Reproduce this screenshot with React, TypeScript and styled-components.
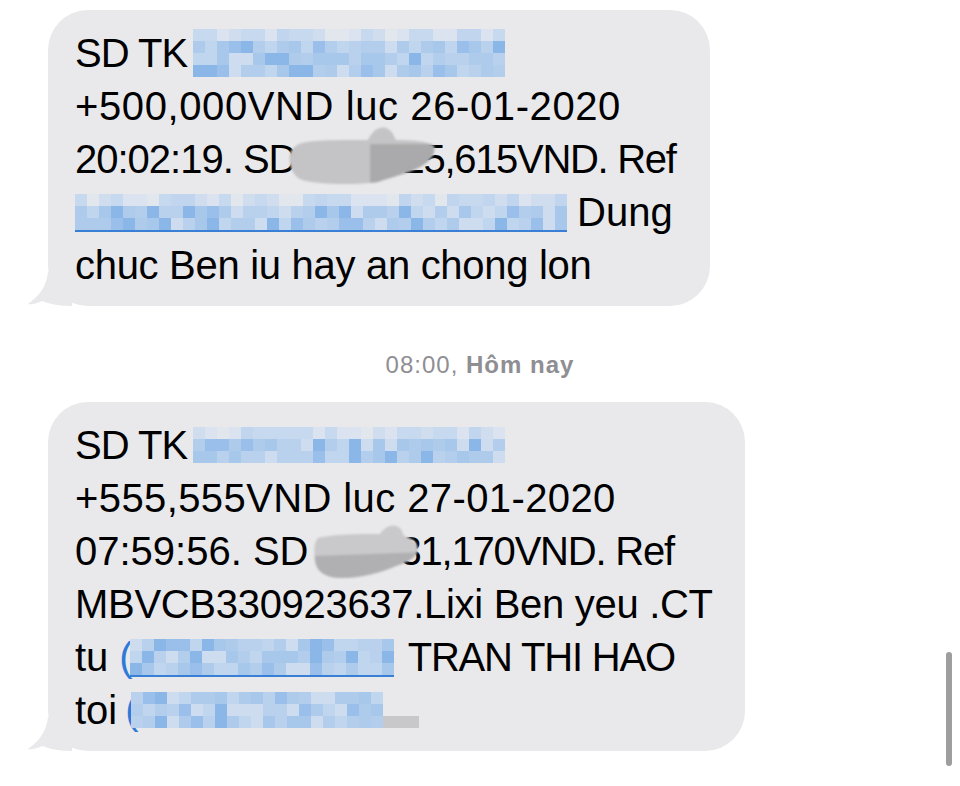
import React from 'react';
import styled, { createGlobalStyle } from 'styled-components';

const GlobalStyle = createGlobalStyle`
  html, body {
    margin: 0;
    padding: 0;
    background: #fff;
  }
  body {
    font-family: 'Liberation Sans', Arial, sans-serif;
  }
`;

const Screen = styled.div`
  width: 960px;
  height: 786px;
  position: relative;
  overflow: hidden;
  background: #fff;
  display: flex;
  flex-direction: column;
  padding: 10px 0 0 48px;
  box-sizing: border-box;
`;

const Message = styled.div`
  position: relative;
`;

const Bubble = styled.div<{ $width: number }>`
  position: relative;
  width: ${(p) => p.$width}px;
  box-sizing: border-box;
  background: #e9e9eb;
  border-radius: 40px;
  padding: 17px 20px 14px 27px;
  color: #000;
  font-size: 40px;
  line-height: 53px;
`;

const Tail = styled.svg`
  position: absolute;
  left: -20px;
  bottom: 0;
  width: 44px;
  height: 34px;
`;

const Line = styled.div<{ $track?: number }>`
  white-space: nowrap;
  display: flex;
  align-items: center;
  height: 53px;
  letter-spacing: ${(p) => p.$track ?? 0}px;
`;

const Seg = styled.span<{ $track: number }>`
  letter-spacing: ${(p) => p.$track}px;
`;

const Gap = styled.span<{ $w: number }>`
  display: inline-block;
  flex: none;
  width: ${(p) => p.$w}px;
`;

const LinkParen = styled.span`
  color: #2f7ad8;
`;

const MosaicBox = styled.span<{ $cols: number; $cell: number; $underline?: boolean; $shift?: number }>`
  display: inline-grid;
  flex: none;
  margin-left: ${(p) => p.$shift ?? 0}px;
  grid-template-columns: repeat(${(p) => p.$cols}, ${(p) => p.$cell}px);
  grid-auto-rows: ${(p) => p.$cell}px;
  border-bottom: ${(p) => (p.$underline ? '2px solid #3a7fd6' : '2px solid transparent')};
`;

const Cell = styled.span`
  display: block;
`;

const Smudge = styled.svg`
  position: absolute;
  pointer-events: none;
`;

const Stamp = styled.div`
  align-self: center;
  margin: 45px 0 0 -48px;
  height: 51px;
  font-size: 24px;
  color: #8e8e93;
  letter-spacing: 1px;
  b {
    font-weight: 700;
  }
`;

const ScrollThumb = styled.div`
  position: absolute;
  right: 8px;
  top: 652px;
  width: 6px;
  height: 114px;
  border-radius: 3px;
  background: #9e9e9e;
`;

const palette = ['#cddcee', '#c0d5ee', '#b3ceed', '#a7c7eb', '#99bfea', '#8bb7e8', '#b9d1ed', '#aecbec'];
const topPalette = ['#dae3ef', '#d0ddee', '#c7d9ee', '#e2e7ee', '#c1d5ee'];

function makeCells(count: number, seed: number) {
  const out: number[] = [];
  let s = seed;
  for (let i = 0; i < count; i++) {
    s = (s * 9301 + 49297) % 233280;
    out.push(s / 233280);
  }
  return out;
}

const Mosaic = ({
  cols,
  rows,
  cell = 12,
  seed,
  underline,
  greyTail,
  lightTop,
  shift,
}: {
  cols: number;
  rows: number;
  cell?: number;
  seed: number;
  underline?: boolean;
  greyTail?: number;
  lightTop?: boolean;
  shift?: number;
}) => {
  const values = makeCells(cols * rows, seed);
  return (
    <MosaicBox $cols={cols} $cell={cell} $underline={underline} $shift={shift}>
      {values.map((v, i) => {
        const r = Math.floor(i / cols);
        const col = i % cols;
        let bg = palette[Math.floor(v * palette.length)];
        if (lightTop && r === 0) bg = topPalette[Math.floor(v * topPalette.length)];
        if (greyTail && col >= cols - greyTail) bg = r === rows - 1 ? '#c8c8ca' : 'transparent';
        return <Cell key={i} style={{ background: bg }} />;
      })}
    </MosaicBox>
  );
};

const BubbleTail = () => (
  <Tail viewBox="0 0 44 34">
    <path d="M20 0 L44 0 L44 34 C34 34 24 33 14 29 C10 31 4 33 0 32 C8 26 18 18 20 0 Z" fill="#e9e9eb" />
  </Tail>
);

const Blot = ({
  left,
  top,
  w,
  h,
  light,
  dark,
  d,
  shade,
}: {
  left: number;
  top: number;
  w: number;
  h: number;
  light: string;
  dark: string;
  d: string;
  shade: string;
}) => (
  <Smudge style={{ left, top }} width={w} height={h} viewBox={`0 0 ${w} ${h}`}>
    <defs>
      <filter id={`soft${left}`} x="-10%" y="-10%" width="120%" height="120%">
        <feGaussianBlur stdDeviation="1" />
      </filter>
      <clipPath id={`clip${left}`}>
        <path d={d} />
      </clipPath>
    </defs>
    <g filter={`url(#soft${left})`}>
      <path d={d} fill={light} />
      <path d={shade} fill={dark} clipPath={`url(#clip${left})`} />
    </g>
  </Smudge>
);

const App = () => (
  <>
    <GlobalStyle />
    <Screen>
      <Message>
        <Bubble $width={662}>
          <BubbleTail />
          <Line $track={-1}>
            SD TK<Gap $w={6} />
            <Mosaic cols={26} rows={4} cell={12} seed={7} lightTop />
          </Line>
          <Line $track={0.6}>+500,000VND luc 26-01-2020</Line>
          <Line>
            <Seg $track={-1}>20:02:19. SD</Seg>
            <Gap $w={106} />
            <Seg $track={-1.3}>25,615VND. Ref</Seg>
          </Line>
          <Line>
            <Mosaic cols={41} rows={3} seed={31} underline lightTop />
            <Gap $w={10} />
            Dung
          </Line>
          <Line $track={-0.3}>chuc Ben iu hay an chong lon</Line>
        </Bubble>
        <Blot
          left={240}
          top={114}
          w={150}
          h={64}
          light="#c4c4c6"
          dark="#aaaaac"
          d="M8 22 C14 16 40 16 80 16 C84 8 90 2 98 4 C104 6 106 12 108 16 C125 16 140 17 146 22 C148 30 142 38 130 44 C118 50 100 54 90 58 C70 61 30 61 14 56 C4 52 0 40 2 30 C3 26 5 24 8 22 Z"
          shade="M82 20 L150 20 L150 64 L82 64 Z"
        />
      </Message>
      <Stamp>
        08:00, <b>Hôm nay</b>
      </Stamp>
      <Message>
        <Bubble $width={697}>
          <BubbleTail />
          <Line $track={-1}>
            SD TK<Gap $w={6} />
            <Mosaic cols={26} rows={3} seed={53} lightTop />
          </Line>
          <Line $track={0.4}>+555,555VND luc 27-01-2020</Line>
          <Line>
            <Seg $track={0}>07:59:56. SD</Seg>
            <Gap $w={91} />
            <Seg $track={-1.2}>31,170VND. Ref</Seg>
          </Line>
          <Line $track={-0.3}>MBVCB330923637.Lixi Ben yeu .CT</Line>
          <Line>
            tu<Gap $w={11} />
            <LinkParen>(</LinkParen>
            <Mosaic cols={22} rows={3} cell={12} seed={97} underline shift={-3} />
            <Gap $w={14} />
            <Seg $track={-1.2}>TRAN THI HAO</Seg>
          </Line>
          <Line>
            toi<Gap $w={8} />
            <LinkParen>(</LinkParen>
            <Mosaic cols={24} rows={3} cell={12} seed={141} greyTail={3} shift={-8} />
          </Line>
        </Bubble>
        <Blot
          left={264}
          top={120}
          w={110}
          h={58}
          light="#c9c9cb"
          dark="#b0b0b2"
          d="M6 16 C20 12 50 12 68 12 C72 6 78 2 84 4 C90 6 90 10 92 14 C100 16 106 20 106 28 C104 36 96 40 84 44 C70 50 50 56 30 56 C14 56 4 50 3 38 C2 28 2 20 6 16 Z"
          shade="M0 34 L110 30 L110 58 L0 58 Z"
        />
      </Message>
      <ScrollThumb />
    </Screen>
  </>
);

export default App;
